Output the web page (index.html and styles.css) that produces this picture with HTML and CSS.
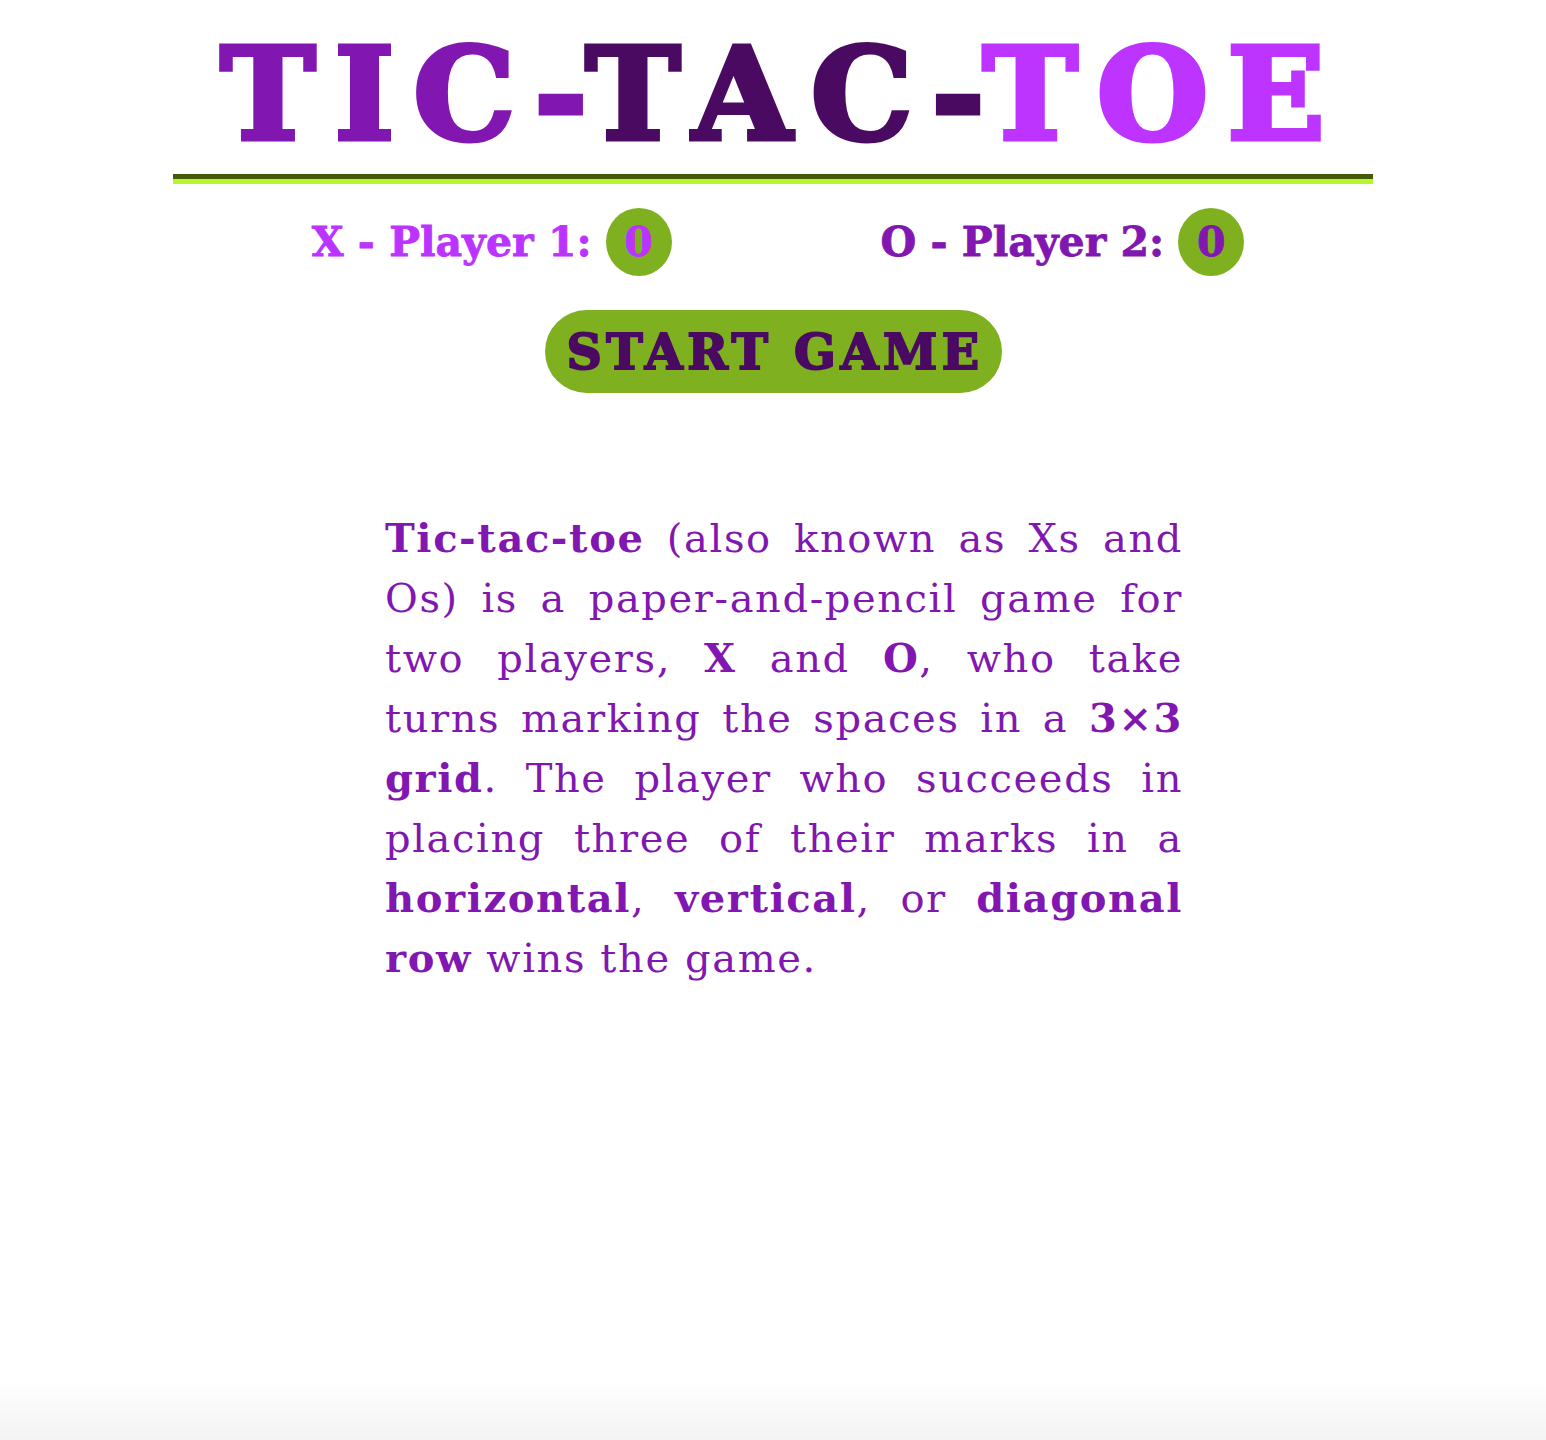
FILE: index.html
```html
<!DOCTYPE html>
<html lang="en">
<head>
<meta charset="utf-8">
<title>Tic-Tac-Toe</title>
<link rel="stylesheet" href="styles.css">
</head>
<body>
<header class="header">
  <h1 class="title"><span class="t1">TIC-</span><span class="t2">TAC-</span><span class="t3">TOE</span></h1>
  <div class="rule"></div>
</header>
<section class="scores">
  <div class="score score-x">X - Player 1: <span class="badge">0</span></div>
  <div class="score score-o">O - Player 2: <span class="badge">0</span></div>
</section>
<div class="actions">
  <button class="start">START GAME</button>
</div>
<main class="content">
  <p class="intro"><strong>Tic-tac-toe</strong> (also known as Xs and Os) is a paper-and-pencil game for two players, <strong>X</strong> and <strong>O</strong>, who take turns marking the spaces in a <strong>3×3 grid</strong>. The player who succeeds in placing three of their marks in a <strong>horizontal</strong>, <strong>vertical</strong>, or <strong>diagonal row</strong> wins the game.</p>
</main>
</body>
</html>
```
FILE: styles.css
```css
html {
  min-height: 100%;
  background: linear-gradient(to bottom, #ffffff calc(100% - 60px), #f3f3f3 100%);
}
body {
  margin: 0;
  font-family: "DejaVu Serif", serif;
  color: #8117b0;
}
.header {
  display: flex;
  flex-direction: column;
  align-items: center;
  padding-top: 30px;
}
.title {
  margin: 0;
  padding-left: 18px;
  font-size: 128px;
  line-height: 128px;
  font-weight: 900;
  letter-spacing: 19px;
  white-space: nowrap;
  -webkit-text-stroke: 5px currentColor;
}
.t1 { color: #8117b0; }
.t2 { color: #4a0a62; }
.t3 { color: #bd33ff; }
.rule {
  width: 1200px;
  margin-top: 16px;
  border-top: 5px solid #455a0b;
  border-bottom: 5px solid #b4f72b;
}
.scores {
  display: flex;
  justify-content: center;
  gap: 209px;
  margin-top: 24px;
  padding-left: 10px;
}
.score {
  display: flex;
  align-items: center;
  gap: 14px;
  font-size: 41px;
  font-weight: 700;
  height: 68px;
  -webkit-text-stroke: 0.8px currentColor;
}
.score-x { color: #bb33ff; }
.score-o { color: #8117b0; }
.badge {
  display: flex;
  align-items: center;
  justify-content: center;
  width: 66px;
  height: 68px;
  border-radius: 50%;
  background: #7fb020;
}
.actions {
  display: flex;
  justify-content: center;
  margin-top: 34px;
}
.start {
  width: 457px;
  height: 83px;
  border: none;
  border-radius: 42px;
  background: #7fb020;
  color: #4a0a62;
  font-family: inherit;
  font-size: 49px;
  font-weight: 900;
  letter-spacing: 4.5px;
  padding: 0 0 0 4px;
  -webkit-text-stroke: 2px currentColor;
}
.content {
  display: flex;
  justify-content: center;
  padding-left: 22px;
  margin-top: 115px;
}
.intro {
  width: 798px;
  margin: 0;
  font-size: 40px;
  line-height: 60px;
  letter-spacing: 1.6px;
  text-align: justify;
  color: #8117b0;
}
.intro strong { font-weight: 700; }
```
